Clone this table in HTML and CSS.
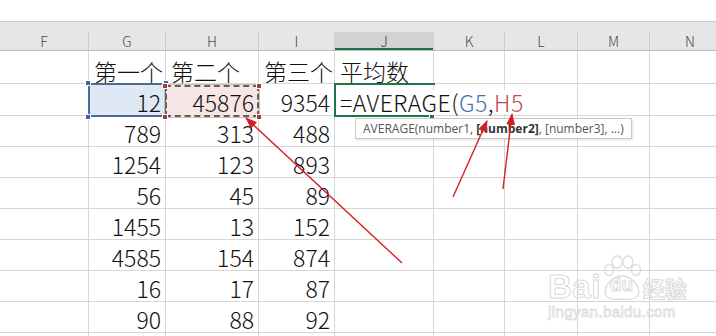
FILE: index.html
```html
<!DOCTYPE html>
<html lang="zh-CN">
<head>
<meta charset="utf-8">
<title>AVERAGE</title>
<link rel="stylesheet" href="styles.css">
</head>
<body>
<div class="app">
  <div class="topbar"></div>
  <div class="strip"></div>
  <div class="sheet">
    <div class="grid heads">
      <div class="ch">F</div>
      <div class="ch">G</div>
      <div class="ch">H</div>
      <div class="ch">I</div>
      <div class="ch ch-active">J</div>
      <div class="ch">K</div>
      <div class="ch">L</div>
      <div class="ch">M</div>
      <div class="ch">N</div>
    </div>
    <div class="grid body">
      <!-- row 4 -->
      <div class="c"></div>
      <div class="c t">第一个</div>
      <div class="c t">第二个</div>
      <div class="c t">第三个</div>
      <div class="c t">平均数</div>
      <div class="c"></div><div class="c"></div><div class="c"></div><div class="c"></div>
      <!-- row 5 -->
      <div class="c"></div>
      <div class="c n sel-blue">12<i class="h tl"></i><i class="h tr"></i><i class="h bl"></i><i class="h br"></i></div>
      <div class="c n sel-red">45876<i class="h tl"></i><i class="h tr"></i><i class="h bl"></i><i class="h br"></i></div>
      <div class="c n">9354</div>
      <div class="c editor"><span class="edit-text">=AVERAGE(<span class="ref-g">G5</span>,<span class="ref-h">H5</span></span><i class="fill-handle"></i></div>
      <div class="c"></div><div class="c"></div><div class="c"></div><div class="c"></div>
      <!-- row 6 -->
      <div class="c"></div>
      <div class="c n">789</div><div class="c n">313</div><div class="c n">488</div>
      <div class="c"></div><div class="c"></div><div class="c"></div><div class="c"></div><div class="c"></div>
      <!-- row 7 -->
      <div class="c"></div>
      <div class="c n">1254</div><div class="c n">123</div><div class="c n">893</div>
      <div class="c"></div><div class="c"></div><div class="c"></div><div class="c"></div><div class="c"></div>
      <!-- row 8 -->
      <div class="c"></div>
      <div class="c n">56</div><div class="c n">45</div><div class="c n">89</div>
      <div class="c"></div><div class="c"></div><div class="c"></div><div class="c"></div><div class="c"></div>
      <!-- row 9 -->
      <div class="c"></div>
      <div class="c n">1455</div><div class="c n">13</div><div class="c n">152</div>
      <div class="c"></div><div class="c"></div><div class="c"></div><div class="c"></div><div class="c"></div>
      <!-- row 10 -->
      <div class="c"></div>
      <div class="c n">4585</div><div class="c n">154</div><div class="c n">874</div>
      <div class="c"></div><div class="c"></div><div class="c"></div><div class="c"></div><div class="c"></div>
      <!-- row 11 -->
      <div class="c"></div>
      <div class="c n">16</div><div class="c n">17</div><div class="c n">87</div>
      <div class="c"></div><div class="c"></div><div class="c"></div><div class="c"></div><div class="c"></div>
      <!-- row 12 -->
      <div class="c"></div>
      <div class="c n">90</div><div class="c n">88</div><div class="c n">92</div>
      <div class="c"></div><div class="c"></div><div class="c"></div><div class="c"></div><div class="c"></div>
      <!-- row 13 -->
      <div class="c"></div><div class="c"></div><div class="c"></div><div class="c"></div><div class="c"></div>
      <div class="c"></div><div class="c"></div><div class="c"></div><div class="c"></div>
    </div>

    <div class="tooltip">AVERAGE(number1, <b>[number2]</b>, [number3], ...)</div>

    <div class="watermark">
      <span class="wm-bai">Bai</span>
      <span class="wm-paw">
        <svg width="40" height="46" viewBox="0 0 40 46" aria-hidden="true">
          <g fill="none" stroke="#dcdcdc" stroke-width="1.3">
            <ellipse cx="7" cy="15" rx="4.5" ry="5.5"/>
            <ellipse cx="15" cy="7" rx="5" ry="6"/>
            <ellipse cx="26" cy="7" rx="5" ry="6"/>
            <ellipse cx="34" cy="15" rx="4.5" ry="5.5"/>
            <path d="M20 21 C10 21 3 31 3 37 C3 44 11 45 20 44 C29 45 37 44 37 37 C37 31 30 21 20 21 Z"/>
          </g>
        </svg>
        <span class="wm-du">du</span>
      </span>
      <span class="wm-jy">经验</span>
      <span class="wm-url">jingyan.baidu.com</span>
    </div>
  </div>

  <svg class="arrows" width="716" height="336" viewBox="0 0 716 336" aria-hidden="true">
    <defs>
      <marker id="ah" markerUnits="userSpaceOnUse" markerWidth="12" markerHeight="9" refX="11" refY="4.5" orient="auto">
        <path d="M0,0 L12,4.5 L0,9 Z" fill="#d81e25"/>
      </marker>
    </defs>
    <g stroke="#d81e25" stroke-width="1.4" fill="none">
      <line x1="402" y1="263" x2="246" y2="118" marker-end="url(#ah)"/>
      <line x1="453" y1="197" x2="487" y2="121" marker-end="url(#ah)"/>
      <line x1="503" y1="189" x2="512" y2="114" marker-end="url(#ah)"/>
    </g>
  </svg>
</div>
</body>
</html>
```

FILE: styles.css
```css
* { box-sizing: border-box; }

html, body {
  margin: 0;
  padding: 0;
  background: #ffffff;
}

body {
  width: 716px;
  height: 336px;
  overflow: hidden;
  font-family: "Noto Sans CJK SC", "Noto Sans", sans-serif;
  color: #111;
}

.app {
  position: relative;
  width: 716px;
  height: 336px;
  overflow: hidden;
}

.topbar {
  height: 22px;
  background: #ffffff;
  border-bottom: 1px solid #c9c9c9;
}

.strip {
  height: 10px;
  background: #e6e6e6;
}

.sheet {
  position: relative;
}

.grid {
  display: grid;
  grid-template-columns: 88px 76px 92px 75px 98px 70px 72px 71px 80px;
  column-gap: 1px;
  width: 740px;
}

.heads {
  height: 19px;
  background: #cdcdcd;
  border-bottom: 1px solid #bdbdbd;
}

.ch {
  background: #e6e6e6;
  color: #4a4a4a;
  font-size: 14px;
  line-height: 18px;
  text-align: center;
  font-weight: 300;
}

.ch-active {
  background: #d3d3d3;
  color: #3b3b3b;
  box-shadow: inset 0 -2px 0 #217346;
}

.body {
  row-gap: 1px;
  grid-template-rows: 32px 31px 30px 30px 30px 30px 30px 30px 30px 30px;
  background: #d6d6d6;
}

.c {
  background: #ffffff;
  font-size: 23px;
  line-height: 24px;
  display: flex;
  align-items: flex-end;
  padding-bottom: 1px;
  white-space: nowrap;
  font-weight: 300;
  position: relative;
}

.t {
  padding-left: 5px;
  padding-bottom: 0;
}

.n {
  justify-content: flex-end;
  padding-right: 4px;
}

/* selected reference G5 */
.sel-blue {
  background: #dfe8f5;
  z-index: 2;
}
.sel-blue::after {
  content: "";
  position: absolute;
  left: -1px;
  right: -1px;
  top: -1px;
  bottom: -2px;
  border: 2px solid #4a6b98;
  pointer-events: none;
}
.sel-blue .h { background: #3e67a3; }

/* selected reference H5 */
.sel-red {
  background: #f8e6e6;
  z-index: 3;
}
.sel-red::after {
  content: "";
  position: absolute;
  left: -1px;
  right: -1px;
  top: 1px;
  bottom: -2px;
  border: 2px dashed #4f6a57;
  outline: 1px solid #e2b4b4;
  pointer-events: none;
}
.sel-red .h { background: #a53a40; }

.h {
  position: absolute;
  width: 6px;
  height: 6px;
  border: 1px solid #ffffff;
  z-index: 4;
}
.h.tl { left: -4px; top: -4px; }
.h.tr { right: -4px; top: -4px; }
.h.bl { left: -4px; bottom: -5px; }
.h.br { right: -4px; bottom: -5px; }
.sel-red .h.tl, .sel-red .h.tr { top: -1px; }

/* active cell J5 in edit mode */
.editor {
  z-index: 5;
  overflow: visible;
  padding-left: 5px;
}
.editor::before {
  content: "";
  position: absolute;
  left: -1px;
  top: -1px;
  width: 99px;
  bottom: -2px;
  border: 2px solid #217346;
  border-right: none;
  pointer-events: none;
}
.edit-text {
  background: #ffffff;
  padding-right: 4px;
  letter-spacing: 0.5px;
}
.ref-g { color: #3f72b5; }
.ref-h { color: #c0474c; }

.fill-handle {
  position: absolute;
  left: 94px;
  bottom: -5px;
  width: 6px;
  height: 6px;
  background: #217346;
  border: 1px solid #ffffff;
}

/* function tooltip */
.tooltip {
  position: absolute;
  left: 355px;
  top: 86px;
  height: 21px;
  padding: 0 7px;
  background: #ffffff;
  border: 1px solid #c8c8c8;
  box-shadow: 1px 1px 2px rgba(0, 0, 0, 0.12);
  font-family: "Open Sans", "Noto Sans", sans-serif;
  font-size: 12px;
  line-height: 19px;
  color: #555;
  white-space: nowrap;
  z-index: 6;
}
.tooltip b {
  color: #333;
  font-weight: 700;
}

/* Baidu watermark */
.watermark {
  position: absolute;
  left: 548px;
  top: 222px;
  width: 140px;
  height: 66px;
  display: flex;
  flex-wrap: wrap;
  align-items: flex-end;
  color: transparent;
  z-index: 1;
  pointer-events: none;
}
.wm-bai {
  font-family: "Liberation Sans", sans-serif;
  font-weight: 700;
  font-size: 33px;
  line-height: 28px;
  letter-spacing: 0.5px;
  -webkit-text-stroke: 1px #dadada;
}
.wm-paw {
  position: relative;
  width: 40px;
  height: 46px;
  margin-left: 1px;
}
.wm-paw svg { display: block; }
.wm-du {
  position: absolute;
  left: 8px;
  top: 19px;
  font-family: "Liberation Sans", sans-serif;
  font-weight: 700;
  font-size: 19px;
  line-height: 22px;
  -webkit-text-stroke: 1px #dadada;
}
.wm-jy {
  font-size: 22px;
  line-height: 28px;
  font-weight: 700;
  -webkit-text-stroke: 1px #dadada;
  margin-left: 1px;
}
.wm-url {
  width: 140px;
  font-family: "Liberation Sans", sans-serif;
  font-size: 15px;
  line-height: 16px;
  letter-spacing: 0.4px;
  -webkit-text-stroke: 0.8px #dcdcdc;
  margin-top: 3px;
}

.arrows {
  position: absolute;
  left: 0;
  top: 0;
  z-index: 10;
  pointer-events: none;
}
```
